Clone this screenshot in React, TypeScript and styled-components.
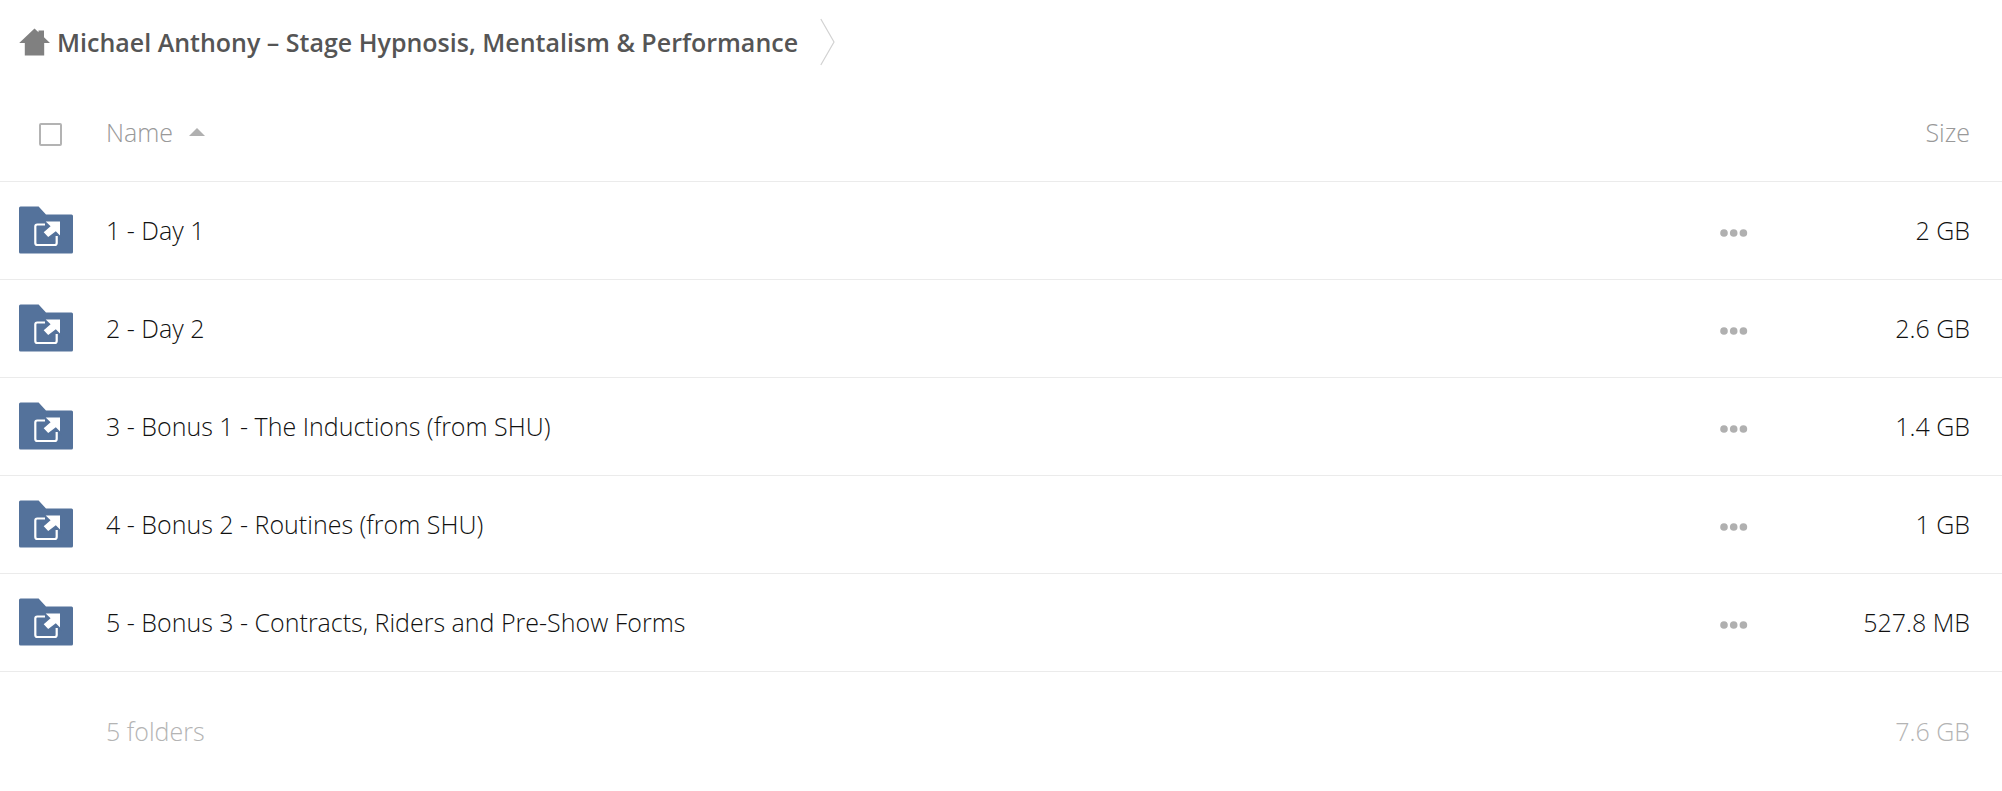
import React from "react";
import styled, { createGlobalStyle } from "styled-components";

const GlobalStyle = createGlobalStyle`
  *, *::before, *::after { box-sizing: border-box; }
  body {
    margin: 0;
    background: #fff;
    color: #111;
    font-family: "Open Sans", sans-serif;
    font-size: 25px;
    font-weight: 300;
    line-height: 34px;
  }
`;

const Breadcrumbs = styled.nav`
  display: flex;
  align-items: center;
  height: 84px;
  padding: 0 19px;
`;

const Crumb = styled.a`
  display: flex;
  align-items: center;
  gap: 6px;
  margin-right: 22px;
  color: #555;
  font-weight: 600;
  text-decoration: none;
  white-space: nowrap;
`;

const Files = styled.table`
  width: 100%;
  border-collapse: separate;
  border-spacing: 0;
  table-layout: fixed;
`;

const Row = styled.tr<{ $summary?: boolean }>`
  height: ${(p) => (p.$summary ? 118 : 98)}px;
  color: ${(p) => (p.$summary ? "#b4b4b4" : "inherit")};
`;

const Cell = styled.td<{ $end?: boolean; $last?: boolean }>`
  padding: 0 ${(p) => (p.$end ? 32 : 0)}px ${(p) => (p.$last ? 0 : 2)}px 0;
  border-bottom: ${(p) => (p.$last ? "0" : "1px solid #ebebeb")};
  text-align: ${(p) => (p.$end ? "right" : "left")};
  vertical-align: middle;
  white-space: nowrap;
`;

const HeadCell = styled(Cell)`
  color: #999;
  font-weight: 300;
`;

const IconCol = styled.col`width: 106px;`;
const MenuCol = styled.col`width: 80px;`;
const SizeCol = styled.col`width: 212px;`;

const SelectAll = styled.input`
  appearance: none;
  display: block;
  width: 23px;
  height: 23px;
  margin: 6px 0 0 39px;
  border: 2px solid #b3b3b3;
  border-radius: 2px;
  background: #fff;
  &:checked { background: #b3b3b3; }
`;

const SortButton = styled.button`
  display: inline-flex;
  align-items: center;
  gap: 16px;
  padding: 0;
  border: 0;
  background: none;
  color: inherit;
  font: inherit;
  cursor: pointer;
`;

const FileLink = styled.a`
  color: inherit;
  text-decoration: none;
`;

const FolderSlot = styled.span`
  display: flex;
  padding-left: 18px;
`;

const MenuButton = styled.button`
  display: flex;
  padding: 14px 10px 8px;
  border: 0;
  background: none;
  cursor: pointer;
`;

const HomeIcon = () => (
  <svg width="32" height="30" viewBox="0 0 32 30" aria-hidden="true">
    <path
      fill="#808080"
      d="M15.5 1.6 L19.5 5.2 V3.4 H25 V10.2 L31 16 H25.2 V28.6 H5.8 V16 H0.2 Z"
    />
  </svg>
);

const CrumbArrow = () => (
  <svg width="16" height="48" viewBox="0 0 16 48" aria-hidden="true">
    <path d="M0.8 1 L14 24 L0.8 47" fill="none" stroke="#d2d2d2" strokeWidth="1.2" />
  </svg>
);

const SortArrow = () => (
  <svg width="16" height="8" viewBox="0 0 16 8" aria-hidden="true">
    <path d="M8 0 L16 8 H0 Z" fill="#b0b0b0" />
  </svg>
);

const SharedFolderIcon = () => (
  <svg width="56" height="48" viewBox="0 0 56 48" aria-hidden="true">
    <path
      fill="#54729b"
      d="M2.5 0.6 H20.6 L28 8.4 H53.5 Q55 8.4 55 9.9 V46 Q55 47.5 53.5 47.5 H2.5 Q1 47.5 1 46 V2.1 Q1 0.6 2.5 0.6 Z"
    />
    <path
      d="M27 18.5 H19.3 Q17.3 18.5 17.3 20.5 V37 Q17.3 39 19.3 39 H36.7 Q38.7 39 38.7 37 V30"
      fill="none"
      stroke="#fff"
      strokeWidth="2.2"
    />
    <path
      fill="#fff"
      stroke="#54729b"
      strokeWidth="3"
      paintOrder="stroke"
      d="M27.7 15.5 H42 V29.6 L37.8 25.2 L30.2 31 L25.7 26.3 L32.6 20.2 Z"
    />
  </svg>
);

const DotsIcon = () => (
  <svg width="28" height="8" viewBox="0 0 28 8" aria-hidden="true">
    <g fill="#b0b0b0">
      <circle cx="4" cy="4" r="3.8" />
      <circle cx="13.7" cy="4" r="3.8" />
      <circle cx="23.4" cy="4" r="3.8" />
    </g>
  </svg>
);

const folders = [
  { name: "1 - Day 1", size: "2 GB" },
  { name: "2 - Day 2", size: "2.6 GB" },
  { name: "3 - Bonus 1 - The Inductions (from SHU)", size: "1.4 GB" },
  { name: "4 - Bonus 2 - Routines (from SHU)", size: "1 GB" },
  { name: "5 - Bonus 3 - Contracts, Riders and Pre-Show Forms", size: "527.8 MB" },
];

export default function App() {
  return (
    <>
      <GlobalStyle />
      <Breadcrumbs aria-label="Breadcrumb">
        <Crumb href="#">
          <HomeIcon />
          Michael Anthony – Stage Hypnosis, Mentalism &amp; Performance
        </Crumb>
        <CrumbArrow />
      </Breadcrumbs>
      <Files>
        <colgroup>
          <IconCol />
          <col />
          <MenuCol />
          <SizeCol />
        </colgroup>
        <thead>
          <Row>
            <HeadCell as="th">
              <SelectAll type="checkbox" aria-label="Select all" />
            </HeadCell>
            <HeadCell as="th" aria-sort="ascending">
              <SortButton type="button">
                Name
                <SortArrow />
              </SortButton>
            </HeadCell>
            <HeadCell as="th" />
            <HeadCell as="th" $end>
              <SortButton type="button">Size</SortButton>
            </HeadCell>
          </Row>
        </thead>
        <tbody>
          {folders.map((folder) => (
            <Row key={folder.name}>
              <Cell>
                <FolderSlot>
                  <SharedFolderIcon />
                </FolderSlot>
              </Cell>
              <Cell>
                <FileLink href="#">{folder.name}</FileLink>
              </Cell>
              <Cell>
                <MenuButton type="button" aria-label={`More actions for ${folder.name}`}>
                  <DotsIcon />
                </MenuButton>
              </Cell>
              <Cell $end>{folder.size}</Cell>
            </Row>
          ))}
        </tbody>
        <tfoot>
          <Row $summary>
            <Cell $last />
            <Cell $last>5 folders</Cell>
            <Cell $last />
            <Cell $last $end>7.6 GB</Cell>
          </Row>
        </tfoot>
      </Files>
    </>
  );
}
